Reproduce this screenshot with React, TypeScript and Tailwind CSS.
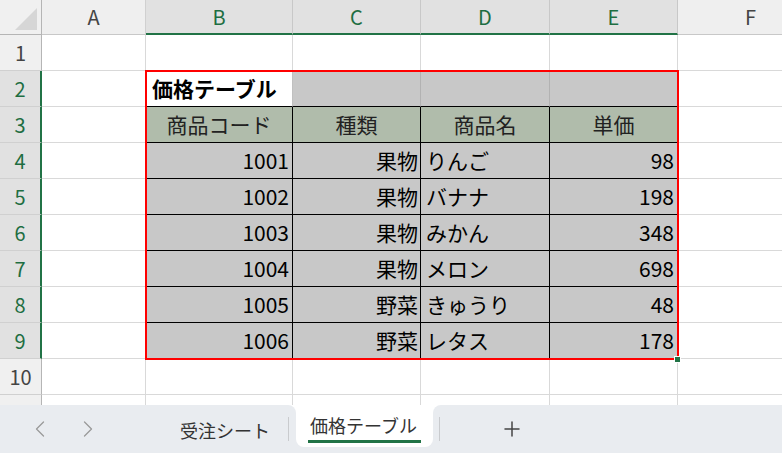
import { ChevronLeft, ChevronRight, Plus } from "lucide-react";

const colWidths = ["w-[104px]", "w-[147px]", "w-[128px]", "w-[129px]", "w-[128px]", "w-[146px]"];
const colLetters = ["A", "B", "C", "D", "E", "F"];

const items = [
  { code: "1001", kind: "果物", name: "りんご", price: "98" },
  { code: "1002", kind: "果物", name: "バナナ", price: "198" },
  { code: "1003", kind: "果物", name: "みかん", price: "348" },
  { code: "1004", kind: "果物", name: "メロン", price: "698" },
  { code: "1005", kind: "野菜", name: "きゅうり", price: "48" },
  { code: "1006", kind: "野菜", name: "レタス", price: "178" },
];

function RowHeader({ n, selected }: { n?: number; selected: boolean }) {
  return (
    <div
      className={`h-[36px] w-[42px] shrink-0 flex items-center justify-center border-b text-[20px] ${
        selected
          ? "bg-[#e1e1e1] text-[#1e6e42] border-b-[#d0d0d0] border-r-2 border-r-[#217346]"
          : "bg-[#f0f0f0] text-[#444] border-b-[#d0d0d0] border-r border-r-[#b5b5b5]"
      }`}
    >
      {n}
    </div>
  );
}

function Blank({ w }: { w: string }) {
  return <div className={`${w} shrink-0 h-full bg-white border-r border-b border-[#d9d9d9]`} />;
}

export default function App() {
  return (
    <div
      className="w-[782px] h-[453px] overflow-hidden bg-white flex flex-col"
      style={{ fontFamily: '"Noto Sans CJK JP", "Noto Sans", sans-serif' }}
    >
      <div className="relative h-[405px] overflow-hidden">
        {/* column headers */}
        <div className="flex h-[35px]">
          <div className="w-[42px] shrink-0 bg-[#f0f0f0] border-r border-b border-[#b5b5b5] flex items-end justify-end p-[4px]">
            <svg width="22" height="22" viewBox="0 0 22 22">
              <polygon points="22,0 22,22 0,22" fill="#d6d6d6" />
            </svg>
          </div>
          {colLetters.map((l, i) => {
            const sel = i >= 1 && i <= 4;
            return (
              <div
                key={l}
                className={`${colWidths[i]} shrink-0 flex items-center justify-center text-[20px] border-r ${
                  sel
                    ? "bg-[#e1e1e1] text-[#1e6e42] border-r-[#c8c8c8] border-b-2 border-b-[#217346]"
                    : "bg-[#efefef] text-[#444] border-r-[#d0d0d0] border-b border-b-[#c8c8c8]"
                }`}
              >
                {l}
              </div>
            );
          })}
        </div>

        {/* row 1 */}
        <div className="flex h-[36px]">
          <RowHeader n={1} selected={false} />
          {colWidths.map((w, i) => (
            <Blank key={i} w={w} />
          ))}
        </div>

        {/* row 2 */}
        <div className="flex h-[36px] text-[21px]">
          <RowHeader n={2} selected />
          <Blank w={colWidths[0]} />
          <div className="w-[147px] shrink-0 h-full bg-white border-r border-r-[#c0c0c0] border-b border-b-black flex items-center pl-[6px] font-bold text-black">
            価格テーブル
          </div>
          <div className="w-[128px] shrink-0 h-full bg-[#c8c8c8] border-r border-r-[#b2b2b2] border-b border-b-black" />
          <div className="w-[129px] shrink-0 h-full bg-[#c8c8c8] border-r border-r-[#b2b2b2] border-b border-b-black" />
          <div className="w-[128px] shrink-0 h-full bg-[#c8c8c8] border-r border-r-[#b2b2b2] border-b border-b-black" />
          <Blank w={colWidths[5]} />
        </div>

        {/* row 3 - table header */}
        <div className="flex h-[36px] text-[21px] text-[#222]">
          <RowHeader n={3} selected />
          <Blank w={colWidths[0]} />
          {["商品コード", "種類", "商品名", "単価"].map((t, i) => (
            <div
              key={t}
              className={`${colWidths[i + 1]} shrink-0 h-full bg-[#b0bcab] border-r border-b border-black flex items-center justify-center`}
            >
              {t}
            </div>
          ))}
          <Blank w={colWidths[5]} />
        </div>

        {/* rows 4-9 */}
        {items.map((it, r) => (
          <div key={it.code} className="flex h-[36px] text-[21px] text-black">
            <RowHeader n={r + 4} selected />
            <Blank w={colWidths[0]} />
            <div className="w-[147px] shrink-0 h-full bg-[#c8c8c8] border-r border-b border-black flex items-center justify-end pr-[3px]">
              {it.code}
            </div>
            <div className="w-[128px] shrink-0 h-full bg-[#c8c8c8] border-r border-b border-black flex items-center justify-end pr-[2px]">
              {it.kind}
            </div>
            <div className="w-[129px] shrink-0 h-full bg-[#c8c8c8] border-r border-b border-black flex items-center pl-[5px]">
              {it.name}
            </div>
            <div className="w-[128px] shrink-0 h-full bg-[#c8c8c8] border-r border-b border-black flex items-center justify-end pr-[3px]">
              {it.price}
            </div>
            <Blank w={colWidths[5]} />
          </div>
        ))}

        {/* row 10 and the top of row 11 */}
        <div className="flex h-[36px]">
          <RowHeader n={10} selected={false} />
          {colWidths.map((w, i) => (
            <Blank key={i} w={w} />
          ))}
        </div>
        <div className="flex h-[36px]">
          <RowHeader selected={false} />
          {colWidths.map((w, i) => (
            <Blank key={i} w={w} />
          ))}
        </div>

        {/* selection outline */}
        <div className="absolute left-[145px] top-[70px] w-[534px] h-[290px] border-2 border-[#ff0000] pointer-events-none" />
        <div className="absolute left-[674px] top-[356px] w-[7px] h-[7px] bg-[#217346] border border-white" />
      </div>

      {/* sheet tabs */}
      <div className="flex h-[48px] bg-white">
        <div className="w-[296px] shrink-0 h-full bg-[#e9ecf0] rounded-tr-[8px] flex items-center">
          <ChevronLeft className="ml-[26px] text-[#9a9a9a]" size={28} strokeWidth={1.1} />
          <ChevronRight className="ml-[20px] text-[#9a9a9a]" size={28} strokeWidth={1.1} />
          <span className="ml-[78px] mt-[2px] text-[18px] text-[#333]">受注シート</span>
          <div className="ml-[18px] w-px h-[24px] bg-[#c9cbce]" />
        </div>
        <div className="w-[137px] shrink-0 h-full bg-[#e9ecf0]">
          <div className="h-[42px] bg-white rounded-b-[8px] flex flex-col items-start pl-[12px] pt-[7px]">
            <span className="px-[2px] text-[18px] text-[#333] leading-[26px]">価格テーブル</span>
            <div className="w-[113px] h-[3px] bg-[#217346] mt-[2px]" />
          </div>
        </div>
        <div className="flex-1 h-full bg-[#e9ecf0] rounded-tl-[8px] flex items-center">
          <div className="ml-[6px] w-px h-[24px] bg-[#c9cbce]" />
          <Plus className="ml-[60px] text-[#444]" size={24} strokeWidth={1.5} />
        </div>
      </div>
    </div>
  );
}
